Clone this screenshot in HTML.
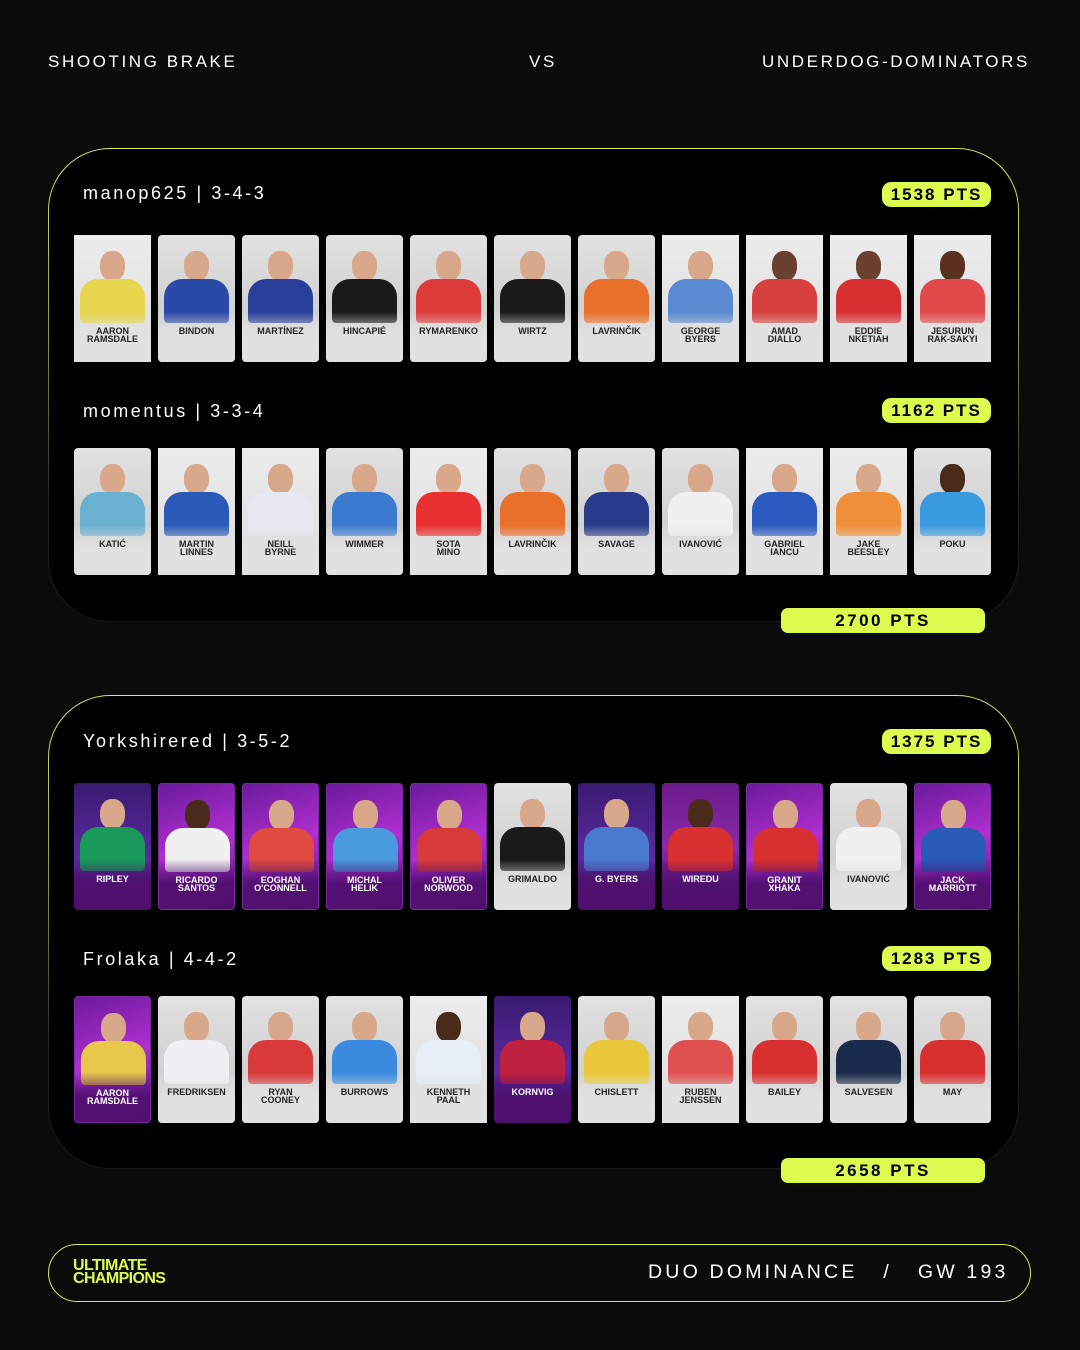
<!DOCTYPE html><html><head><meta charset="utf-8"><style>
*{margin:0;padding:0;box-sizing:border-box}
body{width:1080px;height:1350px;background:#0b0b0b;position:relative;overflow:hidden;font-family:"Liberation Sans",sans-serif;color:#fff}
.t{position:absolute;top:52px;font-size:17px;letter-spacing:2.6px}
.bx{position:absolute;left:48px;width:971px;height:474px;border-radius:62px;padding:1.3px;background:linear-gradient(to bottom,#d6f05c 0%,#8a9a40 40%,#222 75%,#151515 100%)}
.bx>div{width:100%;height:100%;border-radius:61px;background:#000}
.lbl{position:absolute;left:83px;font-size:18px;letter-spacing:2.6px}
.pill{position:absolute;left:882px;width:109px;height:25px;border-radius:9px;background:#dcfb4f;color:#000;font-weight:bold;font-size:17px;letter-spacing:2px;text-align:center;line-height:25px}
.tot{position:absolute;left:781px;width:204px;height:25px;border-radius:7px;background:#dcfb4f;color:#000;font-weight:bold;font-size:17px;letter-spacing:2.5px;text-align:center;line-height:25px}
.row{position:absolute;left:74px;display:flex;gap:7px}
.c{width:77px;height:127px;border-radius:4px;position:relative;overflow:hidden;background:linear-gradient(#e2e2e2,#d0d0d0 60%,#e6e6e6)}
.c.w{border-radius:0;background:linear-gradient(#ececec,#dcdcdc)}
.c.p{background:linear-gradient(160deg,#6a1a9a,#b02fd0 50%,#5a1488);border:1px solid #7a2aa0}
.c.d{background:linear-gradient(#3a1a70,#5a2aa0 60%,#2a1050)}
.c i{position:absolute;left:26px;top:16px;width:25px;height:30px;border-radius:45%;background:#d9a88a}
.c b{position:absolute;left:6px;top:44px;width:65px;height:44px;border-radius:18px 18px 4px 4px;background:var(--j)}
.c span{position:absolute;z-index:2;left:0;right:0;top:92px;text-align:center;font-family:"Liberation Sans Narrow","Liberation Sans",sans-serif;font-weight:bold;font-size:9px;line-height:8px;color:#222}
.c.p span,.c.d span{color:#fff}
.c em{position:absolute;left:0;right:0;bottom:0;height:50px;background:linear-gradient(rgba(225,225,225,0),rgba(225,225,225,.95) 50%)}
.c.p em,.c.d em{background:linear-gradient(rgba(0,0,0,0),rgba(80,15,110,.95) 50%)}
.ft{position:absolute;left:48px;top:1244px;width:983px;height:58px;border:1px solid #cfe95a;border-radius:29px}
</style></head><body>
<div class="t" style="left:48px">SHOOTING BRAKE</div>
<div class="t" style="left:529px">VS</div>
<div class="t" style="left:762px">UNDERDOG-DOMINATORS</div>

<div class="bx" style="top:148px"><div></div></div>
<div class="lbl" style="top:183px">manop625 | 3-4-3</div>
<div class="pill" style="top:182px">1538 PTS</div>
<div class="row" style="top:235px">
<div class="c w" style="--j:#e8d64e"><i></i><b></b><em></em><span>AARON<br>RAMSDALE</span></div>
<div class="c" style="--j:#2a4aa8"><i></i><b></b><em></em><span>BINDON</span></div>
<div class="c" style="--j:#2a3f9a"><i></i><b></b><em></em><span>MARTÍNEZ</span></div>
<div class="c" style="--j:#1a1a1a"><i></i><b></b><em></em><span>HINCAPIÉ</span></div>
<div class="c" style="--j:#dd3a3a"><i></i><b></b><em></em><span>RYMARENKO</span></div>
<div class="c" style="--j:#1a1a1a"><i></i><b></b><em></em><span>WIRTZ</span></div>
<div class="c" style="--j:#e8702a"><i></i><b></b><em></em><span>LAVRINČIK</span></div>
<div class="c w" style="--j:#5a8ad0"><i></i><b></b><em></em><span>GEORGE<br>BYERS</span></div>
<div class="c w" style="--j:#d84040"><i style="background:#6a4030"></i><b></b><em></em><span>AMAD<br>DIALLO</span></div>
<div class="c w" style="--j:#d83030"><i style="background:#6a4030"></i><b></b><em></em><span>EDDIE<br>NKETIAH</span></div>
<div class="c w" style="--j:#e04a4a"><i style="background:#5a3020"></i><b></b><em></em><span>JESURUN<br>RAK-SAKYI</span></div>
</div>
<div class="lbl" style="top:401px">momentus | 3-3-4</div>
<div class="pill" style="top:398px">1162 PTS</div>
<div class="row" style="top:448px">
<div class="c" style="--j:#6ab0d0"><i></i><b></b><em></em><span>KATIĆ</span></div>
<div class="c w" style="--j:#2a5ab8"><i></i><b></b><em></em><span>MARTIN<br>LINNES</span></div>
<div class="c w" style="--j:#e8e8f0"><i></i><b></b><em></em><span>NEILL<br>BYRNE</span></div>
<div class="c" style="--j:#3a7ad0"><i></i><b></b><em></em><span>WIMMER</span></div>
<div class="c w" style="--j:#e83030"><i></i><b></b><em></em><span>SOTA<br>MINO</span></div>
<div class="c" style="--j:#e8702a"><i></i><b></b><em></em><span>LAVRINČIK</span></div>
<div class="c" style="--j:#2a3a8a"><i></i><b></b><em></em><span>SAVAGE</span></div>
<div class="c" style="--j:#f0f0f0"><i></i><b></b><em></em><span>IVANOVIĆ</span></div>
<div class="c w" style="--j:#2a5ac0"><i></i><b></b><em></em><span>GABRIEL<br>IANCU</span></div>
<div class="c w" style="--j:#f0903a"><i></i><b></b><em></em><span>JAKE<br>BEESLEY</span></div>
<div class="c" style="--j:#3a9ae0"><i style="background:#4a2a1a"></i><b></b><em></em><span>POKU</span></div>
</div>
<div class="tot" style="top:608px">2700 PTS</div>

<div class="bx" style="top:695px"><div></div></div>
<div class="lbl" style="top:731px">Yorkshirered | 3-5-2</div>
<div class="pill" style="top:729px">1375 PTS</div>
<div class="row" style="top:783px">
<div class="c d" style="--j:#1a9a5a"><i></i><b></b><em></em><span>RIPLEY</span></div>
<div class="c p" style="--j:#f0f0f0"><i style="background:#4a2a1a"></i><b></b><em></em><span>RICARDO<br>SANTOS</span></div>
<div class="c p" style="--j:#e04a40"><i></i><b></b><em></em><span>EOGHAN<br>O'CONNELL</span></div>
<div class="c p" style="--j:#4a9ae0"><i></i><b></b><em></em><span>MICHAL<br>HELIK</span></div>
<div class="c p" style="--j:#d83a3a"><i></i><b></b><em></em><span>OLIVER<br>NORWOOD</span></div>
<div class="c" style="--j:#1a1a1a"><i></i><b></b><em></em><span>GRIMALDO</span></div>
<div class="c d" style="--j:#4a7ad0"><i></i><b></b><em></em><span>G. BYERS</span></div>
<div class="c d" style="--j:#d83030;background:linear-gradient(#6a1a8a,#8a2aa8 50%,#3a1060)"><i style="background:#4a2a1a"></i><b></b><em></em><span>WIREDU</span></div>
<div class="c p" style="--j:#d83030"><i></i><b></b><em></em><span>GRANIT<br>XHAKA</span></div>
<div class="c" style="--j:#f0f0f0"><i></i><b></b><em></em><span>IVANOVIĆ</span></div>
<div class="c p" style="--j:#2a5ab8"><i></i><b></b><em></em><span>JACK<br>MARRIOTT</span></div>
</div>
<div class="lbl" style="top:949px">Frolaka | 4-4-2</div>
<div class="pill" style="top:946px">1283 PTS</div>
<div class="row" style="top:996px">
<div class="c p" style="--j:#e8c84a"><i></i><b></b><em></em><span>AARON<br>RAMSDALE</span></div>
<div class="c" style="--j:#f0f0f4"><i></i><b></b><em></em><span>FREDRIKSEN</span></div>
<div class="c" style="--j:#d83a3a"><i></i><b></b><em></em><span>RYAN<br>COONEY</span></div>
<div class="c" style="--j:#3a8ae0"><i></i><b></b><em></em><span>BURROWS</span></div>
<div class="c w" style="--j:#e8eef8"><i style="background:#4a2a1a"></i><b></b><em></em><span>KENNETH<br>PAAL</span></div>
<div class="c d" style="--j:#c02040"><i></i><b></b><em></em><span>KORNVIG</span></div>
<div class="c" style="--j:#e8c83a"><i></i><b></b><em></em><span>CHISLETT</span></div>
<div class="c w" style="--j:#e05050"><i></i><b></b><em></em><span>RUBEN<br>JENSSEN</span></div>
<div class="c" style="--j:#d83030"><i></i><b></b><em></em><span>BAILEY</span></div>
<div class="c" style="--j:#1a2a4a"><i></i><b></b><em></em><span>SALVESEN</span></div>
<div class="c" style="--j:#d83030"><i></i><b></b><em></em><span>MAY</span></div>
</div>
<div class="tot" style="top:1158px">2658 PTS</div>

<div class="ft"></div>
<div style="position:absolute;left:73px;top:1259px;color:#dcfb4f;font-weight:bold;font-size:16px;line-height:13px;letter-spacing:-0.6px">ULTIMATE<br>CHAMPIONS</div>
<div style="position:absolute;left:648px;top:1261px;font-size:19.5px;letter-spacing:3.2px;white-space:nowrap">DUO DOMINANCE&nbsp;&nbsp;&nbsp;/&nbsp;&nbsp;&nbsp;GW 193</div>
</body></html>
